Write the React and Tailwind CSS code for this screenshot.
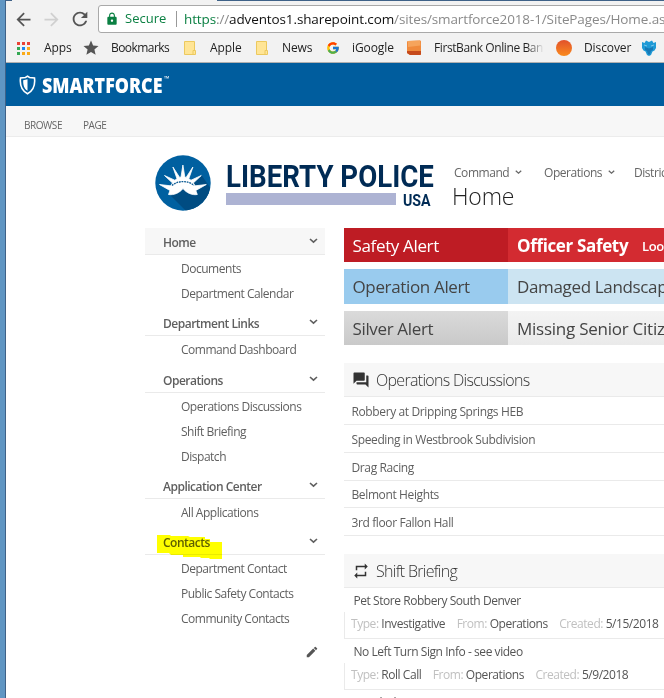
import { FcGoogle } from "react-icons/fc";
import { MdForum, MdArrowBack, MdArrowForward, MdRefresh, MdLock, MdStar, MdRepeat, MdEdit } from "react-icons/md";

function Chevron({ className = "", size = 9 }) {
  return (
    <svg className={className} width={size} height={size * 0.67} viewBox="0 0 9 6" fill="none" stroke="currentColor" strokeWidth="1.6">
      <path d="M1 1l3.5 3.2L8 1" />
    </svg>
  );
}

function FolderIcon() {
  return (
    <svg width="12" height="14" viewBox="0 0 12 14">
      <path d="M.5.5h10v9h1v4H.5z" fill="#ffe596" stroke="#ecc95e" />
      <path d="M9 13V9.500h2" fill="none" stroke="#ecc95e" />
    </svg>
  );
}

const appColors = ["#ea4335", "#ea4335", "#ea4335", "#34a853", "#1a86f0", "#fbab18", "#34a853", "#fbab18", "#fbab18"];

function Bookmark({ icon, label, iconClass, width }) {
  return (
    <div className={`flex shrink-0 items-center ${width}`}>
      <span className={`flex shrink-0 items-center ${iconClass}`}>{icon}</span>
      <span className="whitespace-nowrap">{label}</span>
    </div>
  );
}

function BrowserBar() {
  return (
    <div className="h-[62px] border-b border-[#b0b0b0] bg-[#f2f2f2] pt-[4px]">
      <div className="flex h-[28px] items-center">
        <MdArrowBack className="ml-[7px] shrink-0 text-[#555]" size={21} />
        <MdArrowForward className="ml-[7px] shrink-0 text-[#d0d0d0]" size={21} />
        <MdRefresh className="ml-[7px] shrink-0 text-[#555]" size={22} />
        <div className="ml-[7px] flex h-[28px] w-[700px] shrink-0 items-center rounded-[3px] border border-[#a9a9a9] bg-white text-[13.5px] tracking-[-0.12px] whitespace-nowrap">
          <MdLock className="ml-[6px] text-[#0b8043]" size={14} />
          <span className="ml-[6px] w-[42px] text-[13px] tracking-normal text-[#0b8043]">Secure</span>
          <span className="ml-[9px] h-4 w-px bg-[#999]" />
          <span className="ml-[7px] text-[#8a8a8a]">
            <span className="text-[#0b8043]">https</span>://<span className="text-[#111]">adventos1.sharepoint.com</span>
            /sites/smartforce2018-1/SitePages/Home.as
          </span>
        </div>
      </div>
      <div className="flex h-[29px] items-center pt-px text-[12px] tracking-[-0.1px] text-[#222]">
        <Bookmark
          width="w-[67px]"
          iconClass="ml-[11px] w-[27px]"
          label="Apps"
          icon={
            <span className="grid grid-cols-3 gap-[2px]">
              {appColors.map((c, i) => (
                <span key={i} className="size-[3px]" style={{ background: c }} />
              ))}
            </span>
          }
        />
        <Bookmark
          width="w-[104px]"
          iconClass="ml-[9px] w-[29px]"
          label={<span className="tracking-[-0.55px]">Bookmarks</span>}
          icon={<MdStar size={18} className="text-[#555]" />}
        />
        <Bookmark width="w-[72px]" iconClass="ml-[7px] w-[26px]" label="Apple" icon={<FolderIcon />} />
        <Bookmark width="w-[72px]" iconClass="ml-[7px] w-[26px]" label="News" icon={<FolderIcon />} />
        <Bookmark width="w-[80px]" iconClass="ml-[5px] w-[26px]" label="iGoogle" icon={<FcGoogle size={14} />} />
        <Bookmark
          width="w-[148px]"
          iconClass="ml-[5px] w-[28px]"
          label={<span className="bg-gradient-to-r from-[#222] from-85% to-[#e4e4e4] bg-clip-text tracking-[-0.4px] text-transparent">FirstBank Online Ban</span>}
          icon={
            <svg width="16" height="16" viewBox="0 0 16 16">
              <path d="M1 2q0-1 1-1l12-.5q1 0 1 1V14q0 1-1 1H4l-3-2z" fill="#f08a3c" />
              <path d="M1 11l14 0v3q0 1-1 1H4l-3-2z" fill="#c64a1c" />
              <path d="M2 1l12-.5.5 5L2 7z" fill="#f6a45c" />
            </svg>
          }
        />
        <Bookmark
          width="w-[92px]"
          iconClass="ml-[7px] w-[28px]"
          label="Discover"
          icon={<span className="size-4 rounded-full bg-gradient-to-b from-[#e2502a] to-[#f98a1c]" />}
        />
        <svg className="shrink-0" width="16" height="16" viewBox="0 0 16 16">
          <path d="M1 2l2.500 1L5 .5 8 2l3-1.500L12.500 3 15 2v6l-1.500 2.500-2 1L10 15l-2 1-2-1-1.500-3.500-2-1L1 8z" fill="#1f9ad6" />
          <path d="M4 7l4 1.500L12 7v3l-2 1-1 3-1 .8L7 14l-1-3-2-1z" fill="#1679b6" />
          <path d="M3 5l3 1M13 5l-3 1" stroke="#8fd0ef" strokeWidth=".8" />
        </svg>
      </div>
    </div>
  );
}

function LibertyLogo() {
  return (
    <div className="flex pt-[11px]">
      <svg className="shrink-0" width="56" height="56" viewBox="0 0 56 56">
        <defs>
          <clipPath id="disc">
            <circle cx="28" cy="28" r="27.700" />
          </clipPath>
        </defs>
        <g clipPath="url(#disc)">
          <rect width="56" height="56" fill="#0060a0" />
          <path d="M14 39L31 56h25V34L46.500 20 38 28z" fill="#004c82" />
        </g>
        <path
          fill="#fff"
          stroke="#fff"
          strokeWidth=".8"
          strokeLinejoin="round"
          d="M13.500 39.500L15 35.500 4.500 29.500l11 1.300L17.500 28 9.500 20.500l10.300 4.700 2.200-1.400L17.900 12 24.700 22.500l1.300-.4L27.900 10l1.900 12.100 1.300.4 6.800-10.500-4.100 11.800 2.200 1.400L46.300 20.500l-8 7.500 2 2.800 11-1.300-10.500 6 1.500 4C37 40.500 31 37.500 28 33.500c-3 4-9 7-14.500 6z"
        />
        <path d="M17 30.500c5.500-5.200 16.500-5.200 22 0" fill="none" stroke="#0b5a93" strokeWidth="1.300" strokeDasharray="1.800 .8" />
      </svg>
      <div className="ml-[14.5px] w-[209.5px] pt-[5px] font-['Roboto'] font-bold text-[#002b55]">
        <div className="h-[33px] origin-left scale-x-[0.863] text-[32px] leading-[33px] whitespace-nowrap">LIBERTY POLICE</div>
        <div className="flex">
          <div className="h-[12px] w-[173px] bg-[#adb3d3]" />
          <div className="ml-[7px] h-[12px] text-[16.500px] leading-[15px]">
            <span className="inline-block origin-left scale-x-[0.86]">USA</span>
          </div>
        </div>
      </div>
    </div>
  );
}

const navGroups = [
  { title: "Home", items: ["Documents", "Department Calendar"], active: true, gap: "" },
  { title: "Department Links", items: ["Command Dashboard"], gap: "mt-[4px]" },
  { title: "Operations", items: ["Operations Discussions", "Shift Briefing", "Dispatch"], gap: "mt-[5px]" },
  { title: "Application Center", items: ["All Applications"], gap: "mt-[4px]" },
  { title: "Contacts", items: ["Department Contact", "Public Safety Contacts", "Community Contacts"], marked: true, gap: "mt-[4px]" },
];

function Sidebar() {
  return (
    <nav className="w-[180px] shrink-0 text-[12px] text-[#5f5f5f]">
      {navGroups.map((g) => (
        <div key={g.title} className={g.gap}>
          <div className={`relative flex h-[27px] items-center justify-between border-b border-[#eaeaea] pr-[7.5px] pl-[18px] ${g.active ? "bg-[#f7f7f7]" : ""}`}>
            <span className="pt-[4px] font-semibold tracking-[-0.5px]">{g.title}</span>
            <Chevron />
            {g.marked && (
              <svg className="absolute top-[7px] left-[12px] mix-blend-multiply" width="66" height="25" viewBox="0 0 66 25">
                <path d="M0 0h13l1 1h17l2 1h15v2h5v3h12v17h-12l-1-1h-8l-1-1H26v-2H14l-2-2H0z" fill="#ffff00" />
              </svg>
            )}
          </div>
          {g.items.map((t) => (
            <div key={t} className="flex h-[25px] items-center pt-[3px] pl-[36px] tracking-[-0.48px] whitespace-nowrap">
              {t}
            </div>
          ))}
        </div>
      ))}
      <div className="mt-[15px] flex justify-end pr-[6px]">
        <MdEdit size={14} className="text-[#555]" />
      </div>
    </nav>
  );
}

function Alert({ label, text, className, labelClass, textClass }) {
  return (
    <div className={`mb-[7px] flex text-[17px] tracking-[-0.35px] whitespace-nowrap ${className}`}>
      <div className={`flex w-[164px] shrink-0 items-center pt-px pl-[8.5px] ${labelClass}`}>{label}</div>
      <div className={`flex flex-1 items-center pt-px pl-[9px] ${textClass}`}>{text}</div>
    </div>
  );
}

function PanelTitle({ icon, children }) {
  return (
    <div className="flex h-[34px] items-center border-b border-[#eaeaea] bg-[#f7f7f7] pl-[8px] text-[#333]">
      {icon}
      <span className="ml-[6px] text-[16px] font-light tracking-[-0.7px]">{children}</span>
    </div>
  );
}

const discussions = [
  ["Robbery at Dripping Springs HEB", "h-[28px]"],
  ["Speeding in Westbrook Subdivision", "h-[28px]"],
  ["Drag Racing", "h-[28px]"],
  ["Belmont Heights", "h-[27px]"],
  ["3rd floor Fallon Hall", "h-[28px]"],
];

function Briefing({ title, type, date }) {
  return (
    <div className="tracking-[-0.45px] whitespace-nowrap">
      <div className="flex h-[24px] items-center pt-[2px] pl-[9.5px]">{title}</div>
      <div className="flex h-[27px] items-center gap-[11.5px] border-b border-l border-[#eaeaea] pb-[2px] pl-[6px] text-[#c0c0c0]">
        <span>Type: <span className="text-[#555]">{type}</span></span>
        <span>From: <span className="text-[#555]">Operations</span></span>
        <span>Created: <span className="text-[#555]">{date}</span></span>
      </div>
    </div>
  );
}

export default function App() {
  return (
    <div className="flex h-[698px] w-[664px] overflow-hidden bg-white font-['Open_Sans',sans-serif]">
      <div className="w-[6px] shrink-0 border-r border-[#3f6288] bg-[#6096c3]" />
      <div className="flex w-[658px] flex-col overflow-hidden">
        <div className="flex h-px shrink-0 bg-[#3f6288]">
          <div className="ml-[6px] w-[205px] bg-[#f2f2f2]" />
        </div>
        <BrowserBar />
        <header className="flex h-[43px] shrink-0 items-center bg-[#005d9e] pl-[13px] text-white">
          <svg width="17" height="20" viewBox="0 0 17 20" fill="none">
            <path d="M8.500 1.200l2 1.300 5 .5c.9 7.500-.8 12.500-7 15.800C2.300 15.500.6 10.500 1.500 3l5-.5z" stroke="#fff" strokeWidth="1.600" />
            <path d="M8.500 4.200v11.600C5 13.500 4 10 4.200 5.200z" fill="#fff" />
          </svg>
          <div className="ml-[6px] flex w-[130px] items-start">
            <span className="w-[122px] shrink-0 origin-left scale-x-[0.85] text-[21px] leading-[24px] font-extrabold whitespace-nowrap">SMARTFORCE</span>
            <span className="pt-[2px] text-[7px] leading-[8px]">™</span>
          </div>
        </header>
        <div className="flex h-[31px] shrink-0 items-center gap-[21px] border-b border-[#ececec] bg-[#f7f7f7] pt-[9px] pl-[18px] text-[10px] text-[#666]">
          <span className="w-[38px] tracking-[-0.45px]">BROWSE</span>
          <span className="tracking-[-0.45px]">PAGE</span>
        </div>
        <div className="flex h-[91px] shrink-0 pt-[7px] pl-[149px]">
          <LibertyLogo />
          <div className="ml-[17px] pt-[19px]">
            <div className="flex h-[19px] items-center text-[12px] tracking-[-0.45px] whitespace-nowrap text-[#666]">
              <span className="ml-[2px] w-[61px]">Command</span>
              <Chevron size={7} />
              <span className="ml-[22px] w-[64px]">Operations</span>
              <Chevron size={7} />
              <span className="ml-[19px]">District</span>
            </div>
            <h1 className="text-[23px] leading-[29px] font-light tracking-[-0.2px] text-[#222]">Home</h1>
          </div>
        </div>
        <div className="flex pl-[139px]">
          <Sidebar />
          <main className="ml-[19px] w-[330px] shrink-0 text-[12px] text-[#555]">
            <Alert
              className="h-[34px] text-white"
              labelClass="bg-[#be1c24]"
              textClass="bg-[#d32b31] font-bold"
              label="Safety Alert"
              text={<><span className="w-[125px] tracking-[-0.35px]">Officer Safety</span><span className="pt-[2px] text-[13px] font-semibold">Look out</span></>}
            />
            <Alert className="h-[35px] text-[#444]" labelClass="bg-[#99cbee]" textClass="bg-[#cce4f2]" label="Operation Alert" text="Damaged Landscape" />
            <Alert
              className="h-[34px] text-[#444]"
              labelClass="bg-gradient-to-b from-[#dadada] to-[#c9c9c9]"
              textClass="bg-gradient-to-b from-[#f3f3f3] to-[#eaeaea]"
              label="Silver Alert"
              text={<span className="tracking-[-0.25px]">Missing Senior Citizen</span>}
            />
            <section className="mt-[18px]">
              <PanelTitle icon={<MdForum size={18} />}>Operations Discussions</PanelTitle>
              {discussions.map(([t, h]) => (
                <div key={t} className={`flex items-center border-b border-[#eaeaea] pt-[2px] pl-[7.5px] tracking-[-0.38px] text-[#5f5f5f] ${h}`}>
                  {t}
                </div>
              ))}
            </section>
            <section className="mt-[18px]">
              <PanelTitle icon={<MdRepeat size={18} />}>Shift Briefing</PanelTitle>
              <Briefing title="Pet Store Robbery South Denver" type="Investigative" date="5/15/2018" />
              <Briefing title="No Left Turn Sign Info - see video" type="Roll Call" date="5/9/2018" />
              <div className="pt-[4px] pl-[10px] tracking-[-0.2px]">Bomb threat</div>
            </section>
          </main>
        </div>
      </div>
    </div>
  );
}
